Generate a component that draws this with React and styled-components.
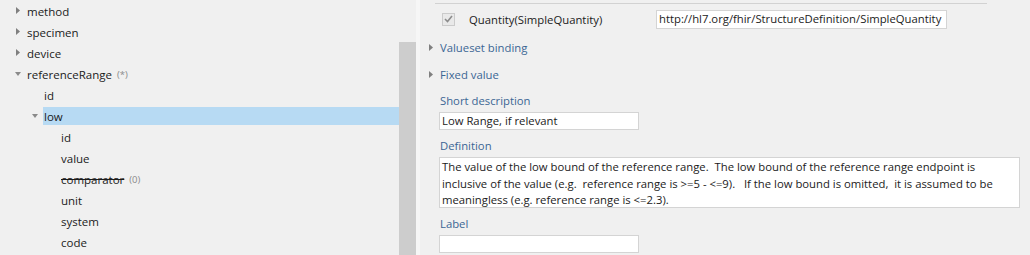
import styled, { createGlobalStyle } from "styled-components";

const GlobalStyle = createGlobalStyle`
  html, body {
    margin: 0;
    padding: 0;
    background: #f0f0f0;
  }
  body {
    font-family: "Open Sans", "Noto Sans", sans-serif;
    font-size: 11.3px;
    color: #1b1b1b;
  }
`;

const Page = styled.div({
  display: "flex",
  width: "1030px",
  height: "255px",
  overflow: "hidden",
  background: "#f0f0f0",
});

const TreePanel = styled.div({
  width: "399px",
  flexShrink: 0,
  display: "flex",
  flexDirection: "column",
});

const TreeRow = styled.div(({ level }) => ({
  display: "flex",
  alignItems: "center",
  height: "21px",
  paddingLeft: `${10 + 17 * level}px`,
  boxSizing: "border-box",
}));

const Expander = styled.span({
  width: "16px",
  height: "21px",
  display: "flex",
  alignItems: "center",
  justifyContent: "center",
  flexShrink: 0,
});

const NodeLabel = styled.span(({ selected }) => ({
  flex: 1,
  height: "18px",
  marginTop: "1px",
  paddingLeft: "1px",
  display: "flex",
  alignItems: "center",
  gap: "5px",
  background: selected ? "#b7daf3" : "transparent",
  fontSize: "11.5px",
  whiteSpace: "nowrap",
}));

const NodeName = styled.span(({ removed }) => ({
  textDecoration: removed ? "line-through" : "none",
}));

const Cardinality = styled.span({
  fontSize: "9.5px",
  color: "#8a8a8a",
});

const Scrollbar = styled.div({
  width: "17px",
  flexShrink: 0,
  display: "flex",
  flexDirection: "column",
  paddingTop: "42px",
  boxSizing: "border-box",
});

const Thumb = styled.div({
  flex: 1,
  background: "#cdcdcd",
});

const Splitter = styled.div({
  width: "4px",
  flexShrink: 0,
  background: "#f6f6f6",
});

const Detail = styled.div({
  flex: 1,
  display: "flex",
  flexDirection: "column",
  padding: "3px 11px 0 9px",
});

const Divider = styled.div({
  marginLeft: "6px",
  width: "552px",
  borderTop: "1px solid #d2d2d2",
});

const TypeRow = styled.div({
  display: "flex",
  alignItems: "center",
  height: "18px",
  marginTop: "6px",
  paddingLeft: "13px",
});

const CheckBox = styled.span({
  width: "13px",
  height: "13px",
  boxSizing: "border-box",
  border: "1px solid #cbcbcb",
  background: "#e9e9e9",
  display: "flex",
  alignItems: "center",
  justifyContent: "center",
  flexShrink: 0,
});

const TypeName = styled.span({
  width: "187px",
  marginLeft: "14px",
  whiteSpace: "nowrap",
});

const TextBox = styled.div(({ width, height }) => ({
  width: `${width}px`,
  height: `${height}px`,
  boxSizing: "border-box",
  border: "1px solid #d4d4d4",
  background: "#ffffff",
  padding: height > 20 ? "1px 2px 0" : "0 2px",
  lineHeight: height > 20 ? "16.5px" : "16px",
  whiteSpace: height > 20 ? "normal" : "nowrap",
  overflow: "hidden",
  color: "#1b1b1b",
}));

const Section = styled.div({
  display: "flex",
  alignItems: "center",
  height: "27px",
  color: "#3b6694",
});

const SectionCaret = styled.span({
  width: "11px",
  display: "flex",
  alignItems: "center",
});

const Field = styled.div({
  display: "flex",
  flexDirection: "column",
  paddingLeft: "10px",
  marginTop: "5px",
  "& + &": {
    marginTop: "8px",
  },
});

const FieldLabel = styled.div({
  height: "16px",
  lineHeight: "16px",
  paddingLeft: "1px",
  marginBottom: "3px",
  color: "#3b6694",
});

const Collapsed = ({ color = "#7f7f7f" }) => (
  <svg width="4" height="7" viewBox="0 0 4 7">
    <path d="M0 0 L4 3.5 L0 7 Z" fill={color} />
  </svg>
);

const Expanded = () => (
  <svg width="6" height="4" viewBox="0 0 6 4">
    <path d="M0 0 L6 0 L3 4 Z" fill="#8a8a8a" />
  </svg>
);

const tree = [
  { name: "method", level: 0, toggle: "closed" },
  { name: "specimen", level: 0, toggle: "closed" },
  { name: "device", level: 0, toggle: "closed" },
  { name: "referenceRange", level: 0, toggle: "open", card: "(*)" },
  { name: "id", level: 1 },
  { name: "low", level: 1, toggle: "open", selected: true },
  { name: "id", level: 2 },
  { name: "value", level: 2 },
  { name: "comparator", level: 2, card: "(0)", removed: true },
  { name: "unit", level: 2 },
  { name: "system", level: 2 },
  { name: "code", level: 2 },
];

const definition =
  "The value of the low bound of the reference range.\u00a0 The low bound of the reference range endpoint is inclusive of the value (e.g.\u00a0 reference range is >=5 - <=9).\u00a0\u00a0 If the low bound is omitted,\u00a0 it is assumed to be meaningless (e.g. reference range is <=2.3).";

export default function App() {
  return (
    <Page>
      <GlobalStyle />
      <TreePanel>
        {tree.map((n, i) => (
          <TreeRow key={i} level={n.level}>
            <Expander>
              {n.toggle === "closed" && <Collapsed />}
              {n.toggle === "open" && <Expanded />}
            </Expander>
            <NodeLabel selected={n.selected}>
              <NodeName removed={n.removed}>{n.name}</NodeName>
              {n.card && <Cardinality>{n.card}</Cardinality>}
            </NodeLabel>
          </TreeRow>
        ))}
      </TreePanel>
      <Scrollbar>
        <Thumb />
      </Scrollbar>
      <Splitter />
      <Detail>
        <Divider />
        <TypeRow>
          <CheckBox>
            <svg width="9" height="8" viewBox="0 0 9 8">
              <path d="M1 4 L3.5 6.5 L8 1" stroke="#8c8c8c" strokeWidth="1.6" fill="none" />
            </svg>
          </CheckBox>
          <TypeName>Quantity(SimpleQuantity)</TypeName>
          <TextBox width={291} height={19}>
            http://hl7.org/fhir/StructureDefinition/SimpleQuantity
          </TextBox>
        </TypeRow>
        <Section style={{ marginTop: "6px" }}>
          <SectionCaret>
            <Collapsed />
          </SectionCaret>
          Valueset binding
        </Section>
        <Section>
          <SectionCaret>
            <Collapsed />
          </SectionCaret>
          Fixed value
        </Section>
        <Field>
          <FieldLabel>Short description</FieldLabel>
          <TextBox width={200} height={18}>
            Low Range, if relevant
          </TextBox>
        </Field>
        <Field>
          <FieldLabel>Definition</FieldLabel>
          <TextBox width={581} height={51}>
            {definition}
          </TextBox>
        </Field>
        <Field>
          <FieldLabel>Label</FieldLabel>
          <TextBox width={200} height={18} />
        </Field>
      </Detail>
    </Page>
  );
}
